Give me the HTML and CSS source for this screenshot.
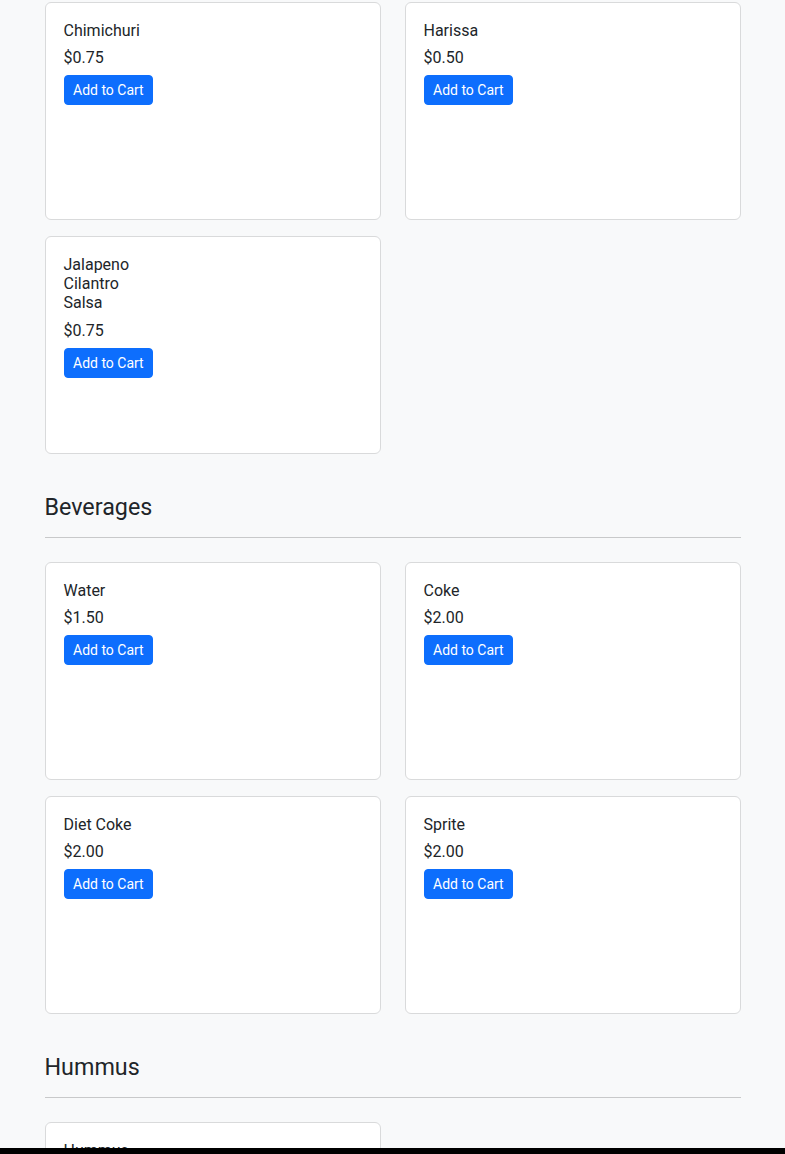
FILE: index.html
```html
<!DOCTYPE html>
<html lang="en">
<head>
<meta charset="utf-8">
<title>Menu</title>
<link rel="stylesheet" href="styles.css">
</head>
<body>
<main class="container">
  <div class="grid">
    <div class="card"><div class="info"><div class="name">Chimichuri</div><div class="price">$0.75</div><button class="btn">Add to Cart</button></div></div>
    <div class="card"><div class="info"><div class="name">Harissa</div><div class="price">$0.50</div><button class="btn">Add to Cart</button></div></div>
    <div class="card"><div class="info"><div class="name">Jalapeno Cilantro Salsa</div><div class="price">$0.75</div><button class="btn">Add to Cart</button></div></div>
  </div>

  <section class="section">
    <h2 class="section-title">Beverages</h2>
    <hr class="divider">
    <div class="grid">
      <div class="card"><div class="info"><div class="name">Water</div><div class="price">$1.50</div><button class="btn">Add to Cart</button></div></div>
      <div class="card"><div class="info"><div class="name">Coke</div><div class="price">$2.00</div><button class="btn">Add to Cart</button></div></div>
      <div class="card"><div class="info"><div class="name">Diet Coke</div><div class="price">$2.00</div><button class="btn">Add to Cart</button></div></div>
      <div class="card"><div class="info"><div class="name">Sprite</div><div class="price">$2.00</div><button class="btn">Add to Cart</button></div></div>
    </div>
  </section>

  <section class="section">
    <h2 class="section-title">Hummus</h2>
    <hr class="divider">
    <div class="grid">
      <div class="card"><div class="info"><div class="name">Hummus</div><div class="price">$4.00</div><button class="btn">Add to Cart</button></div></div>
    </div>
  </section>
</main>
<div class="bottom-bar"></div>
</body>
</html>
```

FILE: styles.css
```css
* { box-sizing: border-box; }
html, body { margin: 0; padding: 0; }
body {
  background: #f8f9fa;
  color: #212529;
  font-family: Roboto, "Liberation Sans", Arial, sans-serif;
  font-size: 16px;
  line-height: 1.2;
}
.container {
  width: 696px;
  margin: 0 auto;
  padding-top: 2px;
  padding-bottom: 40px;
}
.grid {
  display: grid;
  grid-template-columns: 336px 336px;
  column-gap: 24px;
  row-gap: 16px;
}
.card {
  background: #fff;
  border: 1px solid #d9dadb;
  border-radius: 6px;
  min-height: 218px;
  padding: 18px 18px 16px;
}
.info {
  width: 90px;
}
.name { margin-bottom: 8px; }
.price { margin-bottom: 8px; }
.btn {
  display: inline-block;
  font-family: inherit;
  font-size: 14px;
  line-height: 20px;
  padding: 4px 8.5px;
  color: #fff;
  background: #0d6efd;
  border: 1px solid #0d6efd;
  border-radius: 4px;
  white-space: nowrap;
  cursor: pointer;
}
.section { padding-top: 39px; }
.section-title {
  margin: 0 0 15px;
  font-size: 23.3px;
  font-weight: 400;
  line-height: 1.2;
  padding-top: 1px;
}
.divider {
  margin: 0 0 24px;
  border: 0;
  border-top: 1px solid #c8c9ca;
  height: 0;
}
.bottom-bar {
  position: fixed;
  left: 0;
  right: 0;
  bottom: 0;
  height: 6px;
  background: #000;
}
```
